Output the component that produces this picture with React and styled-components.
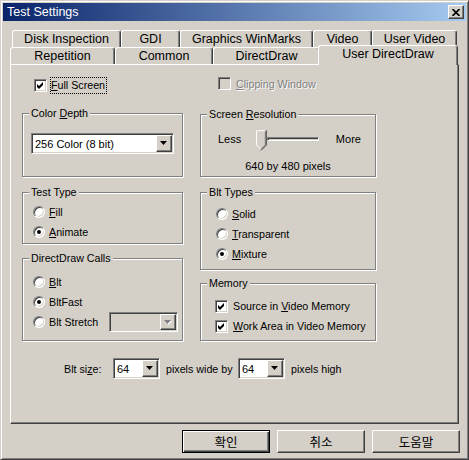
import React from "react";
import styled, { createGlobalStyle } from "styled-components";

const GlobalStyle = createGlobalStyle`
  html, body {
    margin: 0;
    padding: 0;
    background: #d4d0c8;
  }
  * {
    box-sizing: border-box;
  }
`;

const Window = styled.div`
  width: 469px;
  height: 460px;
  background: #d4d0c8;
  border: 1px solid;
  border-color: #d4d0c8 #404040 #404040 #d4d0c8;
  box-shadow: inset 1px 1px #fff, inset -1px -1px #808080;
  padding: 2px;
  font-family: "Liberation Sans", Arial, sans-serif;
  font-size: 10.7px;
  color: #000;
  display: flex;
  flex-direction: column;
`;

const TitleBar = styled.div`
  height: 18px;
  flex: none;
  background: linear-gradient(to right, #0a246a, #a6caf0);
  display: flex;
  align-items: center;
  justify-content: space-between;
  padding: 0 2px 0 4px;
`;

const TitleText = styled.span`
  color: #fff;
  font-size: 12.5px;
  line-height: 18px;
`;

const CloseButton = styled.div`
  width: 16px;
  height: 14px;
  background: #d4d0c8;
  border: 1px solid;
  border-color: #fff #404040 #404040 #fff;
  box-shadow: inset -1px -1px #808080;
  display: flex;
  align-items: center;
  justify-content: center;
`;

const Body = styled.div`
  flex: 1;
  display: flex;
  flex-direction: column;
  padding: 9px 6px 0 7px;
`;

const TabRow = styled.div`
  display: flex;
  height: 17px;
  padding-left: ${(p) => p.$indent || 0}px;
`;

const Tab = styled.div`
  width: ${(p) => p.$w}px;
  height: ${(p) => (p.$active ? 20 : 17)}px;
  margin: ${(p) => (p.$active ? "-2px -2px -1px -2px" : "0")};
  position: relative;
  z-index: ${(p) => (p.$active ? 2 : 0)};
  background: #d4d0c8;
  border-top: 1px solid #fff;
  border-left: 1px solid #fff;
  border-right: 1px solid #404040;
  box-shadow: inset -1px 0 #808080;
  border-radius: 3px 3px 0 0;
  text-align: center;
  font-size: 12.5px;
  line-height: 16px;
  white-space: nowrap;
`;

const Panel = styled.div`
  width: 449px;
  height: 360px;
  border: 1px solid;
  border-color: #fff #404040 #404040 #fff;
  box-shadow: inset -1px -1px #808080;
  padding-left: 11px;
  display: flex;
  flex-direction: column;
`;

const Columns = styled.div`
  display: flex;
  gap: 17px;
`;

const Column = styled.div`
  width: ${(p) => p.$w}px;
  display: flex;
  flex-direction: column;
`;

const CheckRow = styled.div`
  display: flex;
  align-items: center;
  gap: ${(p) => p.$gap || 4}px;
  height: ${(p) => p.$h || 17}px;
  margin-top: ${(p) => p.$mt || 0}px;
  padding-left: ${(p) => p.$pl || 0}px;
  color: ${(p) => (p.$disabled ? "#808080" : "#000")};
  text-shadow: ${(p) => (p.$disabled ? "1px 1px #fff" : "none")};
  white-space: nowrap;
`;

const Box = styled.span`
  width: 13px;
  height: 13px;
  flex: none;
  border: 1px solid;
  border-color: #808080 #fff #fff #808080;
  box-shadow: inset 1px 1px #404040, inset -1px -1px #d4d0c8;
  background: ${(p) => (p.$disabled ? "#d4d0c8" : "#fff")};
  display: flex;
  align-items: center;
  justify-content: center;
`;

const Radio = styled.span`
  width: 12px;
  height: 12px;
  flex: none;
  border-radius: 50%;
  border: 1px solid;
  border-color: #808080 #fff #fff #808080;
  box-shadow: inset 1px 1px #404040, inset -1px -1px #d4d0c8;
  background: #fff;
  display: flex;
  align-items: center;
  justify-content: center;
  &::after {
    content: "";
    width: 4px;
    height: 4px;
    border-radius: 50%;
    background: ${(p) => (p.$on ? "#000" : "transparent")};
  }
`;

const FocusLabel = styled.span`
  outline: 1px dotted #000;
  padding: 1px 1px 1px 0;
  line-height: 13px;
`;

const Group = styled.div`
  height: ${(p) => p.$h}px;
  margin-top: ${(p) => p.$mt}px;
  border: 1px solid #808080;
  box-shadow: inset 1px 1px #fff, 1px 1px #fff;
  display: flex;
  flex-direction: column;
`;

const GroupTitle = styled.div`
  align-self: flex-start;
  margin: -7px 0 0 6px;
  padding: 0 2px;
  line-height: 13px;
  background: #d4d0c8;
  white-space: nowrap;
`;

const List = styled.div`
  display: flex;
  flex-direction: column;
  margin-top: ${(p) => p.$mt}px;
`;

const RadioRow = styled.div`
  display: flex;
  align-items: center;
  gap: 4px;
  height: 20px;
  padding-left: ${(p) => p.$pl}px;
  padding-right: 4px;
  white-space: nowrap;
`;

const ComboBox = styled.div`
  width: ${(p) => p.$w}px;
  height: ${(p) => p.$h || 21}px;
  flex: none;
  margin: ${(p) => p.$m || "0"};
  border: 1px solid;
  border-color: #808080 #fff #fff #808080;
  box-shadow: inset 1px 1px #404040, inset -1px -1px #d4d0c8;
  background: ${(p) => (p.$disabled ? "#d4d0c8" : "#fff")};
  padding: 1px;
  display: flex;
`;

const ComboValue = styled.span`
  flex: 1;
  padding-left: 2px;
  font-size: 11px;
  display: flex;
  align-items: center;
  white-space: nowrap;
`;

const ComboButton = styled.span`
  width: 16px;
  flex: none;
  background: #d4d0c8;
  border: 1px solid;
  border-color: #fff #404040 #404040 #fff;
  box-shadow: inset -1px -1px #808080;
  display: flex;
  align-items: center;
  justify-content: center;
`;

const SliderRow = styled.div`
  display: flex;
  align-items: flex-start;
  height: 21px;
  margin-top: 9px;
  padding-left: 17px;
`;

const SliderLabel = styled.span`
  width: ${(p) => p.$w}px;
  margin-left: ${(p) => p.$ml || 0}px;
  line-height: 13px;
  margin-top: 3px;
  font-size: 11px;
`;

const Track = styled.div`
  width: 53px;
  height: 4px;
  margin-top: 7px;
  border: 1px solid;
  border-color: #808080 #fff #fff #808080;
  box-shadow: inset 1px 1px #404040;
`;

const Caption = styled.div`
  margin-top: 9px;
  line-height: 13px;
  text-align: center;
  font-size: 11px;
`;

const SizeRow = styled.div`
  display: flex;
  align-items: center;
  height: 21px;
  margin-top: 17px;
  padding-left: 42px;
  white-space: nowrap;
`;

const SizeText = styled.span`
  width: ${(p) => p.$w}px;
  margin-left: ${(p) => p.$ml || 0}px;
  flex: none;
`;

const ButtonRow = styled.div`
  display: flex;
  justify-content: flex-end;
  gap: 7px;
  margin-top: 6px;
`;

const Button = styled.div`
  width: 88px;
  height: 23px;
  background: #d4d0c8;
  border: 1px solid;
  border-color: ${(p) => (p.$default ? "#000" : "#fff #404040 #404040 #fff")};
  box-shadow: ${(p) =>
    p.$default
      ? "inset 1px 1px #fff, inset -1px -1px #404040, inset -2px -2px #808080"
      : "inset -1px -1px #808080"};
  display: flex;
  align-items: center;
  justify-content: center;
  font-family: "Noto Sans CJK KR", "Liberation Sans", sans-serif;
  font-size: 12.5px;
`;

const Check = () => (
  <svg width="7" height="7" viewBox="0 0 7 7">
    <polygon points="0,2 2,4 6,0 6,3 2,7 0,5" fill="#000" />
  </svg>
);

const Arrow = ({ disabled }) => (
  <svg width="8" height="5" viewBox="0 0 8 5">
    {disabled && <polygon points="1,1 8,1 4.5,5" fill="#fff" />}
    <polygon points="0,0 7,0 3.5,4" fill={disabled ? "#808080" : "#000"} />
  </svg>
);

const Combo = ({ w, h, value, disabled, m }) => (
  <ComboBox $w={w} $h={h} $disabled={disabled} $m={m}>
    <ComboValue>{value}</ComboValue>
    <ComboButton>
      <Arrow disabled={disabled} />
    </ComboButton>
  </ComboBox>
);

const Thumb = () => (
  <svg width="11" height="21" viewBox="0 0 11 21">
    <polygon points="0,0 10,0 10,15 5,20 0,15" fill="#d4d0c8" />
    <polyline points="0.5,15 0.5,0.5 10,0.5" fill="none" stroke="#fff" />
    <polyline points="0.5,15 5,19.5" fill="none" stroke="#fff" />
    <polyline points="9.5,1 9.5,15 5,19.5" fill="none" stroke="#808080" />
    <polyline points="10.5,0 10.5,15.3 5.2,20.6" fill="none" stroke="#404040" />
  </svg>
);

const RadioItem = ({ on, pl, children }) => (
  <RadioRow $pl={pl}>
    <Radio $on={on} />
    <span>{children}</span>
  </RadioRow>
);

const App = () => {
  return (
    <>
      <GlobalStyle />
      <Window>
        <TitleBar>
          <TitleText>Test Settings</TitleText>
          <CloseButton>
            <svg width="8" height="7" viewBox="0 0 8 7">
              <path d="M0.5 0 L7.5 7 M7.5 0 L0.5 7" stroke="#000" strokeWidth="1.6" />
            </svg>
          </CloseButton>
        </TitleBar>
        <Body>
          <TabRow $indent={2}>
            <Tab $w={109}>Disk Inspection</Tab>
            <Tab $w={59}>GDI</Tab>
            <Tab $w={133}>Graphics WinMarks</Tab>
            <Tab $w={59}>Video</Tab>
            <Tab $w={85}>User Video</Tab>
          </TabRow>
          <TabRow>
            <Tab $w={105}>Repetition</Tab>
            <Tab $w={98}>Common</Tab>
            <Tab $w={107}>DirectDraw</Tab>
            <Tab $w={140} $active>
              User DirectDraw
            </Tab>
          </TabRow>
          <Panel>
            <Columns>
              <Column $w={161}>
                <CheckRow $mt={12} $pl={12} $gap={4}>
                  <Box>
                    <Check />
                  </Box>
                  <FocusLabel>
                    <u>F</u>ull Screen
                  </FocusLabel>
                </CheckRow>
                <Group $h={64} $mt={19}>
                  <GroupTitle>
                    Color <u>D</u>epth
                  </GroupTitle>
                  <Combo w={143} value="256 Color (8 bit)" m="13px 0 0 8px" />
                </Group>
                <Group $h={52} $mt={15}>
                  <GroupTitle>Test Type</GroupTitle>
                  <List $mt={3}>
                    <RadioItem pl={10}>
                      <u>F</u>ill
                    </RadioItem>
                    <RadioItem pl={10} on>
                      <u>A</u>nimate
                    </RadioItem>
                  </List>
                </Group>
                <Group $h={83} $mt={14}>
                  <GroupTitle>DirectDraw Calls</GroupTitle>
                  <List $mt={7}>
                    <RadioItem pl={10}>
                      <u>B</u>lt
                    </RadioItem>
                    <RadioItem pl={10} on>
                      BltFast
                    </RadioItem>
                    <RadioRow $pl={10}>
                      <Radio />
                      <span>Blt Stretch</span>
                      <Combo w={69} h={20} disabled m="0 0 0 auto" />
                    </RadioRow>
                  </List>
                </Group>
              </Column>
              <Column $w={176}>
                <CheckRow $mt={10} $pl={18} $gap={5} $disabled>
                  <Box $disabled />
                  <span>
                    <u>C</u>lipping Window
                  </span>
                </CheckRow>
                <Group $h={63} $mt={22}>
                  <GroupTitle>
                    Screen <u>R</u>esolution
                  </GroupTitle>
                  <SliderRow>
                    <SliderLabel $w={39}>Less</SliderLabel>
                    <Thumb />
                    <Track />
                    <SliderLabel $w={40} $ml={17}>
                      More
                    </SliderLabel>
                  </SliderRow>
                  <Caption>640 by 480 pixels</Caption>
                </Group>
                <Group $h={78} $mt={15}>
                  <GroupTitle>Blt Types</GroupTitle>
                  <List $mt={5}>
                    <RadioItem pl={15}>
                      <u>S</u>olid
                    </RadioItem>
                    <RadioItem pl={15}>
                      <u>T</u>ransparent
                    </RadioItem>
                    <RadioItem pl={15} on>
                      <u>M</u>ixture
                    </RadioItem>
                  </List>
                </Group>
                <Group $h={58} $mt={13}>
                  <GroupTitle>Memory</GroupTitle>
                  <List $mt={6}>
                    <CheckRow $h={20} $pl={14} $gap={5}>
                      <Box>
                        <Check />
                      </Box>
                      <span>
                        Source in <u>V</u>ideo Memory
                      </span>
                    </CheckRow>
                    <CheckRow $h={20} $pl={14} $gap={5}>
                      <Box>
                        <Check />
                      </Box>
                      <span>
                        <u>W</u>ork Area in Video Memory
                      </span>
                    </CheckRow>
                  </List>
                </Group>
              </Column>
            </Columns>
            <SizeRow>
              <SizeText $w={49}>
                Blt si<u>z</u>e:
              </SizeText>
              <Combo w={47} value="64" />
              <SizeText $w={72} $ml={6}>
                pixels wide by
              </SizeText>
              <Combo w={47} value="64" />
              <SizeText $w={60} $ml={6}>
                pixels high
              </SizeText>
            </SizeRow>
          </Panel>
          <ButtonRow>
            <Button $default>확인</Button>
            <Button>취소</Button>
            <Button>도움말</Button>
          </ButtonRow>
        </Body>
      </Window>
    </>
  );
};

export default App;
